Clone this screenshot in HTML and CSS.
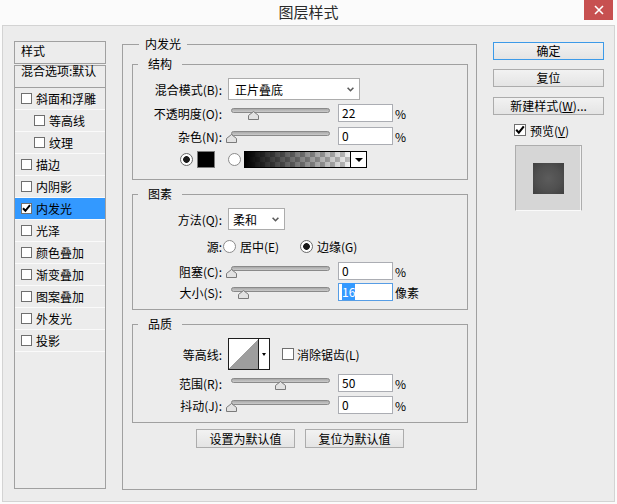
FILE: index.html
```html
<!DOCTYPE html>
<html lang="zh-CN">
<head>
<meta charset="utf-8">
<title>图层样式</title>
<link rel="stylesheet" href="styles.css">
</head>
<body>
<svg class="defs" width="0" height="0" aria-hidden="true">
  <defs>
    <linearGradient id="trk" x1="0" y1="0" x2="0" y2="1">
      <stop offset="0" stop-color="#a3a3a3"/>
      <stop offset="1" stop-color="#d0d0d0"/>
    </linearGradient>
  </defs>
</svg>
<div class="window">
  <header class="titlebar">
    <h1 class="title">图层样式</h1>
    <button class="close" aria-label="关闭"><svg width="10" height="10" viewBox="0 0 10 10"><path d="M1 1L9 9M9 1L1 9" stroke="#fff" stroke-width="1.6"/></svg></button>
  </header>
  <main class="dialog">
    <aside class="panel">
      <div class="panel-head">样式</div>
      <ul class="style-list">
        <li class="blend">混合选项:默认</li>
        <li class="item"><span class="cb"></span>斜面和浮雕</li>
        <li class="item sub"><span class="cb"></span>等高线</li>
        <li class="item sub"><span class="cb"></span>纹理</li>
        <li class="item"><span class="cb"></span>描边</li>
        <li class="item"><span class="cb"></span>内阴影</li>
        <li class="item active"><span class="cb"><svg width="9" height="9" viewBox="0 0 9 9"><path d="M1 4.2L3.4 6.8L8 1.2" fill="none" stroke="#000" stroke-width="2"/></svg></span>内发光</li>
        <li class="item"><span class="cb"></span>光泽</li>
        <li class="item"><span class="cb"></span>颜色叠加</li>
        <li class="item"><span class="cb"></span>渐变叠加</li>
        <li class="item"><span class="cb"></span>图案叠加</li>
        <li class="item"><span class="cb"></span>外发光</li>
        <li class="item"><span class="cb"></span>投影</li>
      </ul>
    </aside>

    <fieldset class="group effect">
      <legend>内发光</legend>

      <fieldset class="group sub-group structure">
        <legend>结构</legend>
        <div class="row row-select">
          <span class="lbl">混合模式(B):</span>
          <div class="select select-blend"><span>正片叠底</span><svg class="chev" width="7" height="5" viewBox="0 0 7 5"><path d="M0.6 0.8L3.5 3.7L6.4 0.8" fill="none" stroke="#5a5a5a" stroke-width="1.6"/></svg></div>
        </div>
        <div class="row mt4">
          <span class="lbl">不透明度(O):</span>
          <svg class="slider" width="106" height="18" viewBox="0 0 106 18"><rect x="5.5" y="4.5" width="98" height="4" rx="2" fill="url(#trk)" stroke="#8a8a8a"/><path transform="translate(27.5 0)" d="M0 7.5L5 11.5V15.5H-5V11.5Z" fill="#e2e2e2" stroke="#7a7a7a"/></svg>
          <span class="num">22</span>
          <span class="unit">%</span>
        </div>
        <div class="row mt5">
          <span class="lbl">杂色(N):</span>
          <svg class="slider" width="106" height="18" viewBox="0 0 106 18"><rect x="5.5" y="4.5" width="98" height="4" rx="2" fill="url(#trk)" stroke="#8a8a8a"/><path transform="translate(5.5 0)" d="M0 7.5L5 11.5V15.5H-5V11.5Z" fill="#e2e2e2" stroke="#7a7a7a"/></svg>
          <span class="num">0</span>
          <span class="unit">%</span>
        </div>
        <div class="row row-color">
          <span class="radio on"></span>
          <span class="swatch"></span>
          <span class="radio"></span>
          <div class="ramp-box"><span class="ramp"></span><span class="ramp-drop"><span class="tri"></span></span></div>
        </div>
      </fieldset>

      <fieldset class="group sub-group elements">
        <legend>图素</legend>
        <div class="row row-select">
          <span class="lbl">方法(Q):</span>
          <div class="select select-method"><span>柔和</span><svg class="chev" width="7" height="5" viewBox="0 0 7 5"><path d="M0.6 0.8L3.5 3.7L6.4 0.8" fill="none" stroke="#5a5a5a" stroke-width="1.6"/></svg></div>
        </div>
        <div class="row row-source">
          <span class="lbl">源:</span>
          <span class="opt opt-center"><span class="radio"></span>居中(E)</span>
          <span class="opt"><span class="radio on"></span>边缘(G)</span>
        </div>
        <div class="row mt8">
          <span class="lbl">阻塞(C):</span>
          <svg class="slider" width="106" height="18" viewBox="0 0 106 18"><rect x="5.5" y="4.5" width="98" height="4" rx="2" fill="url(#trk)" stroke="#8a8a8a"/><path transform="translate(5.5 0)" d="M0 7.5L5 11.5V15.5H-5V11.5Z" fill="#e2e2e2" stroke="#7a7a7a"/></svg>
          <span class="num">0</span>
          <span class="unit">%</span>
        </div>
        <div class="row mt3">
          <span class="lbl">大小(S):</span>
          <svg class="slider" width="106" height="18" viewBox="0 0 106 18"><rect x="5.5" y="4.5" width="98" height="4" rx="2" fill="url(#trk)" stroke="#8a8a8a"/><path transform="translate(17.5 0)" d="M0 7.5L5 11.5V15.5H-5V11.5Z" fill="#e2e2e2" stroke="#7a7a7a"/></svg>
          <span class="num focus"><span class="sel">16</span></span>
          <span class="unit">像素</span>
        </div>
      </fieldset>

      <fieldset class="group sub-group quality">
        <legend>品质</legend>
        <div class="row row-contour">
          <span class="lbl">等高线:</span>
          <div class="contour"><span class="curve"></span><span class="contour-drop"><span class="tri tri-sm"></span></span></div>
          <span class="cb cb-aa"></span>
          <span class="aa-text">消除锯齿(L)</span>
        </div>
        <div class="row mt4">
          <span class="lbl">范围(R):</span>
          <svg class="slider" width="106" height="18" viewBox="0 0 106 18"><rect x="5.5" y="4.5" width="98" height="4" rx="2" fill="url(#trk)" stroke="#8a8a8a"/><path transform="translate(54.5 0)" d="M0 7.5L5 11.5V15.5H-5V11.5Z" fill="#e2e2e2" stroke="#7a7a7a"/></svg>
          <span class="num">50</span>
          <span class="unit">%</span>
        </div>
        <div class="row mt4">
          <span class="lbl">抖动(J):</span>
          <svg class="slider" width="106" height="18" viewBox="0 0 106 18"><rect x="5.5" y="4.5" width="98" height="4" rx="2" fill="url(#trk)" stroke="#8a8a8a"/><path transform="translate(5.5 0)" d="M0 7.5L5 11.5V15.5H-5V11.5Z" fill="#e2e2e2" stroke="#7a7a7a"/></svg>
          <span class="num">0</span>
          <span class="unit">%</span>
        </div>
      </fieldset>

      <div class="defaults">
        <button class="btn btn-default">设置为默认值</button>
        <button class="btn btn-default">复位为默认值</button>
      </div>
    </fieldset>

    <div class="actions">
      <button class="btn btn-ok">确定</button>
      <button class="btn btn-reset">复位</button>
      <button class="btn btn-new">新建样式(<span class="u">W</span>)...</button>
      <div class="preview-check">
        <span class="cb cb-preview"><svg width="10" height="10" viewBox="0 0 10 10"><path d="M1.2 4.8L3.8 7.6L8.8 1.4" fill="none" stroke="#000" stroke-width="2.1"/></svg></span>
        <span>预览(<span class="u">V</span>)</span>
      </div>
      <div class="preview"><span class="preview-swatch"></span></div>
    </div>
  </main>
</div>
</body>
</html>
```
FILE: styles.css
```css
* { box-sizing: border-box; }
html, body { margin: 0; padding: 0; }
body {
  width: 617px;
  height: 504px;
  overflow: hidden;
  background: #fbfbfb;
  font-family: "Noto Sans CJK SC", "Noto Sans", "Liberation Sans", sans-serif;
  font-size: 12px;
  color: #000;
}
.defs { position: absolute; width: 0; height: 0; }

/* title bar */
.titlebar {
  height: 25px;
  display: grid;
  grid-template-columns: 1fr auto 1fr;
}
.title {
  grid-column: 2;
  margin: 0;
  font-size: 15px;
  font-weight: 400;
  line-height: 23px;
  color: #2a2a2a;
}
.close {
  grid-column: 3;
  justify-self: end;
  align-self: start;
  width: 29px;
  height: 20px;
  margin-right: 4px;
  padding: 0;
  border: 0;
  background: #c75050;
  display: flex;
  align-items: center;
  justify-content: center;
}

/* dialog body */
.dialog {
  display: flex;
  align-items: flex-start;
  height: 477px;
  margin: 0 2px;
  padding: 10px 0 0 11px;
  border: 1px solid #d3d3d3;
  background: #ececec;
}

/* left list */
.panel { flex: none; width: 92px; margin-top: 5px; }
.panel-head {
  height: 23px;
  padding-left: 6px;
  border: 1px solid #a0a0a0;
  line-height: 17px;
}
.style-list {
  list-style: none;
  margin: 1px 0 0;
  padding: 0;
  height: 424px;
  border: 1px solid #a0a0a0;
}
.blend {
  height: 22px;
  padding-left: 6px;
  border-bottom: 1px solid #a0a0a0;
  line-height: 10px;
  white-space: nowrap;
}
.item {
  display: flex;
  align-items: center;
  height: 22px;
  padding-left: 6px;
  border-bottom: 1px solid #fafafa;
  white-space: nowrap;
}
.item.sub { padding-left: 19px; }
.item.active { background: #3399ff; }
.cb {
  flex: none;
  width: 11px;
  height: 11px;
  margin-right: 4px;
  border: 1px solid #6f6f6f;
  background: #fff;
  display: flex;
  align-items: center;
  justify-content: center;
}

/* group boxes */
.group {
  margin: 0;
  min-width: 0;
  border: 1px solid #a0a0a0;
}
.group > legend {
  height: 16px;
  padding: 0 6px;
  line-height: 16px;
}
.effect {
  flex: none;
  width: 355px;
  height: 454px;
  margin-left: 16px;
  padding: 4px 8px 0 9px;
}
.effect > legend { margin-left: 7px; }
.sub-group {
  width: 336px;
  padding: 6px 0 11px;
}
.sub-group > legend { margin-left: 5px; padding: 0 10px; }
.elements, .quality { margin-top: 6px; padding-bottom: 8px; }

/* rows */
.row { display: flex; align-items: center; height: 18px; white-space: nowrap; }
.mt3 { margin-top: 3px; }
.mt4 { margin-top: 4px; }
.mt5 { margin-top: 5px; }
.mt8 { margin-top: 8px; }
.lbl { flex: none; width: 89px; text-align: right; }
.row-select { height: 22px; }

.select {
  flex: none;
  display: flex;
  align-items: center;
  justify-content: space-between;
  height: 22px;
  margin-left: 6px;
  padding: 0 5px 0 6px;
  border: 1px solid #acacac;
  background: #fff;
}
.select-blend { width: 132px; }
.select-method { width: 57px; padding-left: 4px; }
.chev { display: block; }

.slider { flex: none; display: block; margin-left: 4px; }
.num {
  flex: none;
  width: 55px;
  height: 18px;
  margin-left: 6px;
  padding-left: 3px;
  border: 1px solid #abadb3;
  background: #fff;
  line-height: 16px;
}
.num.focus { border-color: #569de5; }
.num .sel { background: #3399ff; color: #fff; }
.unit { margin-left: 2px; }

/* colour row */
.row-color { height: 17px; margin-top: 6px; padding-left: 47px; }
.radio {
  flex: none;
  width: 13px;
  height: 13px;
  border: 1px solid #8b8b8b;
  border-radius: 50%;
  background: #fff;
}
.radio.on { background: radial-gradient(circle, #1a1a1a 0 3px, #fff 3.7px); border-color: #6a6a6a; }
.swatch {
  flex: none;
  width: 18px;
  height: 17px;
  margin: 0 13px 0 4px;
  border: 1px solid #7b7b7b;
  background: #000;
}
.ramp-box {
  flex: none;
  display: flex;
  width: 123px;
  height: 17px;
  margin-left: 3px;
  border: 1px solid #000;
  background: #fff;
}
.ramp {
  flex: 1;
  background:
    linear-gradient(to right, #000, rgba(0,0,0,0.05)),
    repeating-conic-gradient(#c8c8c8 0 25%, #fff 0 50%) 0 0 / 10px 10px;
}
.ramp-drop {
  flex: none;
  width: 16px;
  border-left: 1px solid #000;
  display: flex;
  align-items: center;
  justify-content: center;
}
.tri {
  width: 0;
  height: 0;
  border-left: 4px solid transparent;
  border-right: 4px solid transparent;
  border-top: 4px solid #000;
}
.tri-sm { border-left-width: 2.5px; border-right-width: 2.5px; border-top-width: 3px; }

/* source row */
.row-source { height: 16px; margin-top: 8px; }
.opt { display: flex; align-items: center; }
.opt .radio { margin-right: 4px; }
.opt-center { width: 77px; margin-left: 1px; }

/* contour row */
.row-contour { height: 32px; }
.contour {
  flex: none;
  display: flex;
  width: 42px;
  height: 32px;
  margin-left: 6px;
  border: 1px solid #1e1e1e;
  background: #fff;
}
.curve { flex: 1; background: linear-gradient(to top left, #9e9e9e 50%, #fff 50%); }
.contour-drop {
  flex: none;
  width: 11px;
  border-left: 1px solid #1e1e1e;
  display: flex;
  align-items: center;
  justify-content: center;
}
.cb-aa { width: 12px; height: 12px; margin: 0 3px 0 12px; }

/* buttons */
.defaults { display: flex; gap: 10px; margin-top: 6px; padding-left: 64px; }
.btn {
  padding: 0;
  border: 1px solid #acacac;
  background: linear-gradient(#f2f2f2, #e4e4e4);
  font: inherit;
  color: #000;
  text-align: center;
  white-space: nowrap;
}
.btn-default { width: 99px; height: 19px; line-height: 17px; }
.u { text-decoration: underline; }

.actions {
  flex: none;
  display: flex;
  flex-direction: column;
  width: 111px;
  margin: 6px 0 0 16px;
}
.actions .btn { height: 18px; line-height: 16px; }
.btn-ok { border-color: #3c9ae8; }
.btn-reset { margin-top: 9px; }
.btn-new { margin-top: 10px; }
.preview-check {
  display: flex;
  align-items: center;
  height: 16px;
  margin-top: 7px;
  padding-left: 21px;
  white-space: nowrap;
}
.cb-preview { width: 12px; height: 12px; margin-right: 4px; }
.preview {
  display: flex;
  align-items: center;
  justify-content: center;
  width: 67px;
  height: 66px;
  margin: 7px 0 0 22px;
  border: 1px solid #adadad;
  border-bottom-color: #fafafa;
  background: #d6d6d6;
  box-shadow: inset -1px 0 #f2f2f2;
}
.preview-swatch {
  width: 31px;
  height: 31px;
  background: radial-gradient(circle, #5c5c5c 0%, #505050 55%, #3f3f3f 100%);
}
```
